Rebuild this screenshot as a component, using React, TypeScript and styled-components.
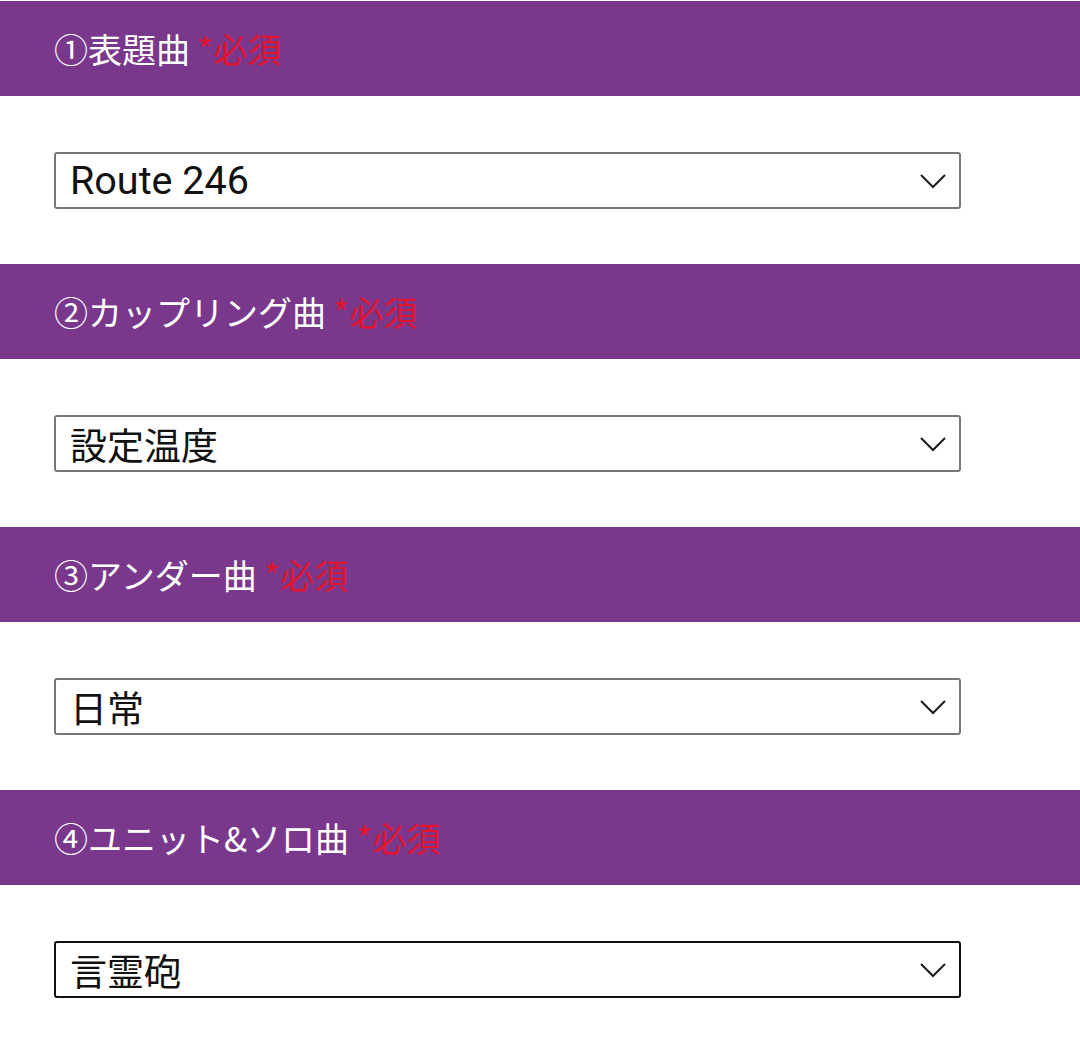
import styled, { createGlobalStyle } from 'styled-components'

const GlobalStyle = createGlobalStyle`
  body {
    margin: 0;
    background: #ffffff;
    font-family: Roboto, "Noto Sans CJK JP", sans-serif;
  }
`

type Field = {
  label: string
  value: string
  latin?: boolean
  active?: boolean
}

const fields: Field[] = [
  { label: '①表題曲', value: 'Route 246', latin: true },
  { label: '②カップリング曲', value: '設定温度' },
  { label: '③アンダー曲', value: '日常' },
  { label: '④ユニット&ソロ曲', value: '言霊砲', active: true },
]

const Chevron = () => (
  <svg width="28" height="16" viewBox="0 0 28 16" fill="none">
    <polyline points="2,2 14,14 26,2" stroke="#1a1a1a" strokeWidth="2" />
  </svg>
)

const App = () => {
  return (
    <Page>
      <GlobalStyle />
      {fields.map((f) => (
        <Section key={f.label}>
          <SectionHeader>
            {f.label}
            <Required> *必須</Required>
          </SectionHeader>
          <SelectRow>
            <SelectBox $active={f.active} role="combobox">
              <SelectValue $latin={f.latin}>{f.value}</SelectValue>
              <Chevron />
            </SelectBox>
          </SelectRow>
        </Section>
      ))}
    </Page>
  )
}

const Page = styled.main`
  display: flex;
  flex-direction: column;
  padding-top: 1px;
`

const Section = styled.section`
  display: flex;
  flex-direction: column;
`

const SectionHeader = styled.div`
  height: 95px;
  display: flex;
  align-items: center;
  padding-left: 54px;
  background: #7a388d;
  color: #ffffff;
  font-family: "Noto Sans CJK JP", "Noto Sans", sans-serif;
  font-size: 34px;
  white-space: pre;
`

const Required = styled.span`
  color: #e2132d;
`

const SelectRow = styled.div`
  padding: 56px 0 55px 54px;
`

const SelectBox = styled.div<{ $active?: boolean }>`
  box-sizing: border-box;
  width: 907px;
  height: 57px;
  display: flex;
  align-items: center;
  justify-content: space-between;
  padding: 0 12px 0 14px;
  border: 2px solid ${(p) => (p.$active ? '#111111' : '#777777')};
  border-radius: 3px;
  background: #ffffff;
`

const SelectValue = styled.span<{ $latin?: boolean }>`
  font-family: Roboto, "Noto Sans CJK JP", sans-serif;
  font-size: ${(p) => (p.$latin ? '39.5px' : '37px')};
  color: #111111;
`

export default App
